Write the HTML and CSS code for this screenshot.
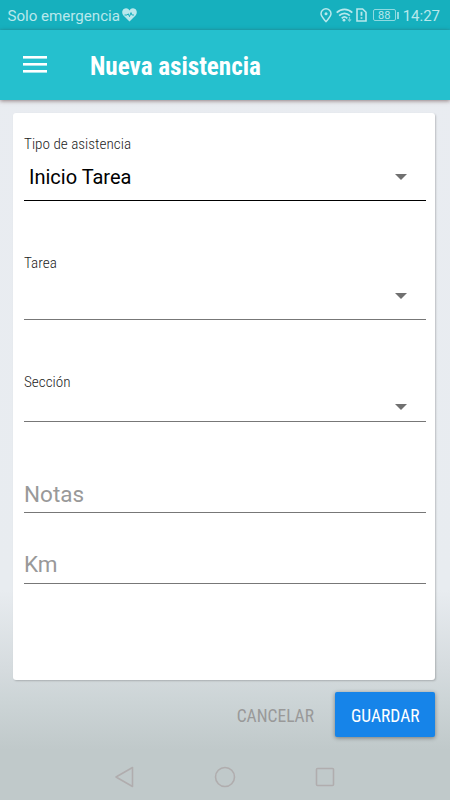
FILE: index.html
```html
<!DOCTYPE html>
<html lang="es">
<head>
    <meta charset="UTF-8">
    <meta name="viewport" content="width=device-width, initial-scale=1.0">
    <title>Nueva asistencia</title>
    <link rel="stylesheet" href="styles.css">
</head>
<body>
    <div class="status-bar">
        <span class="carrier">Solo emergencia</span>
        <svg class="heart" width="15" height="14" viewBox="0 0 15 14">
            <path d="M7.5 13.5L1.2 7.2C-.4 5.2 0 2.3 1.8 1.1 3.7-.2 6.2.2 7.5 2.4 8.8.2 11.3-.2 13.2 1.1 15 2.3 15.4 5.2 13.8 7.2z" fill="#b9e8ec"/>
            <path d="M2.5 7H5L6.3 5.8 7.5 8.6 9 4.6 9.9 7H12" fill="none" stroke="#16b0be" stroke-width="1"/>
        </svg>
        <div class="status-icons">
            <svg width="12" height="15" viewBox="0 0 12 15" fill="none" stroke="#b9e8ec" stroke-width="1.5">
                <path d="M6 13.6C3.4 10.5 1 8.4 1 5.8a5 5 0 0 1 10 0C11 8.4 8.6 10.5 6 13.6z"/>
                <circle cx="6" cy="5.8" r="1.5" fill="#b9e8ec" stroke="none"/>
            </svg>
            <svg width="17" height="14" viewBox="0 0 17 14" fill="none" stroke="#b9e8ec" stroke-width="1.8">
                <path d="M.7 4.6C5.2.2 11.8.2 16.3 4.6M3.2 7.6C6.3 4.5 10.7 4.5 13.8 7.6M5.7 10.3C7.4 8.6 9.6 8.6 11.3 10.3"/>
                <circle cx="8" cy="12.2" r="1.4" fill="#b9e8ec" stroke="none"/>
                <path d="M13.5 9v4M11.9 11.4l1.6 1.7 1.6-1.7" stroke="#7cd3db" stroke-width="1.2"/>
            </svg>
            <svg width="11" height="14" viewBox="0 0 11 14" fill="none" stroke="#b9e8ec" stroke-width="1.6">
                <path d="M1 1h5.6L10 4.3V13H1z"/>
                <path d="M5.5 3.8v4M5.5 9.2v1.6" stroke-width="1.8"/>
            </svg>
            <div class="battery"><span>88</span><i></i></div>
        </div>
        <span class="clock">14:27</span>
    </div>

    <header class="toolbar">
        <svg class="menu" width="24" height="18" viewBox="0 0 24 18" fill="#fff">
            <rect y="1" width="24" height="2.6"/>
            <rect y="8" width="24" height="2.6"/>
            <rect y="15" width="24" height="2.6"/>
        </svg>
        <h1>Nueva asistencia</h1>
    </header>

    <main class="card">
        <div class="field field-tipo">
            <label>Tipo de asistencia</label>
            <div class="select"><span>Inicio Tarea</span><i class="arrow"></i></div>
        </div>
        <div class="field field-tarea">
            <label>Tarea</label>
            <div class="select"><span></span><i class="arrow"></i></div>
        </div>
        <div class="field field-seccion">
            <label>Sección</label>
            <div class="select"><span></span><i class="arrow"></i></div>
        </div>
        <div class="input input-notas">Notas</div>
        <div class="input input-km">Km</div>
    </main>

    <div class="actions">
        <button class="btn btn-cancel">CANCELAR</button>
        <button class="btn btn-save">GUARDAR</button>
    </div>

    <nav class="nav-bar">
        <svg width="22" height="22" viewBox="0 0 22 22"><path d="M2 11L18.5 1.5V20.5z"/></svg>
        <svg width="22" height="22" viewBox="0 0 22 22"><circle cx="11" cy="11" r="9.5"/></svg>
        <svg width="22" height="22" viewBox="0 0 22 22"><rect x="2.5" y="2.5" width="17" height="17" rx="1"/></svg>
    </nav>
</body>
</html>
```

FILE: styles.css
```css
* {
    box-sizing: border-box;
}
body {
    margin: 0;
    height: 800px;
    display: flex;
    flex-direction: column;
    overflow: hidden;
    font-family: Roboto, sans-serif;
    background: linear-gradient(#e9ecf1 0, #e8ecf0 590px, #d5dbde 670px, #cdd5d7 698px, #c0c9ca 750px);
}
.status-bar {
    height: 30px;
    flex: none;
    display: flex;
    align-items: center;
    padding: 0 10px 0 7.5px;
    background: #16b0be;
    color: #b9e8ec;
    font-size: 15px;
}
.carrier {
    padding-top: 1px;
    font-size: 15.1px;
}
.heart {
    margin-left: 2px;
}
.status-icons {
    display: flex;
    align-items: center;
    gap: 3.5px;
    margin-left: auto;
}
.battery {
    display: flex;
    align-items: center;
    gap: 1px;
    margin-left: 2px;
    font-size: 11px;
    line-height: 11px;
}
.battery span {
    width: 23px;
    height: 12px;
    border: 1px solid #8fdae1;
    border-radius: 2px;
    text-align: center;
}
.battery i {
    width: 2px;
    height: 7px;
    background: #8fdae1;
}
.clock {
    margin-left: 4px;
    padding-top: 1px;
    font-size: 15px;
}
.toolbar {
    height: 69.5px;
    flex: none;
    display: flex;
    align-items: center;
    padding: 0 23px;
    background: #25c0ce;
    box-shadow: 0 1px 4px rgba(60, 20, 20, 0.5);
}
.menu {
    margin-top: -1px;
}
h1 {
    margin: 3px 0 0 43px;
    color: #fff;
    font-family: 'Roboto Condensed', Roboto, sans-serif;
    font-stretch: 75%;
    font-size: 25.1px;
    font-weight: 700;
}
.card {
    width: 422.5px;
    height: 567.5px;
    flex: none;
    margin: 13px 0 0 12.5px;
    padding: 21.5px 9px 0 11.5px;
    background: #fff;
    border-radius: 3px;
    box-shadow: 1px 1px 2px rgba(0, 0, 0, 0.2);
}
.field {
    display: flex;
    flex-direction: column;
    height: 67px;
    border-bottom: 1px solid #777;
}
.field-tipo {
    border-color: #000;
}
.field-tarea {
    margin-top: 52px;
}
.field-seccion {
    margin-top: 52px;
    height: 50px;
}
label {
    height: 20px;
    line-height: 20px;
    color: #222;
    font-family: 'Roboto Condensed', Roboto, sans-serif;
    font-stretch: 75%;
    font-size: 15.2px;
    font-weight: 350;
}
.select {
    flex: 1;
    display: flex;
    align-items: center;
    justify-content: space-between;
    padding: 0 19px 0 5px;
    font-size: 20px;
}
.arrow {
    border: 6px solid transparent;
    border-top-color: #707070;
    border-bottom: 0;
}
.input {
    display: flex;
    align-items: flex-end;
    padding-bottom: 5px;
    height: 71px;
    border-bottom: 1px solid #777;
    color: #999;
    font-size: 22.5px;
    line-height: 26px;
}
.input-notas {
    height: 91px;
}
.input-km {
    padding-bottom: 6px;
}
.actions {
    display: flex;
    justify-content: flex-end;
    gap: 5px;
    margin: 12px 15px 0 0;
}
.btn {
    height: 45px;
    border: none;
    border-radius: 2px;
    padding: 3px 16px 0;
    background: none;
    font-family: 'Roboto Condensed', Roboto, sans-serif;
    font-stretch: 75%;
    font-size: 17.5px;
}
.btn-cancel {
    color: #999;
}
.btn-save {
    width: 100px;
    background: #1684e9;
    color: #fff;
    box-shadow: 0 1px 4px rgba(0, 0, 0, 0.4);
}
.nav-bar {
    display: flex;
    justify-content: center;
    gap: 78px;
    margin-top: 29px;
}
.nav-bar svg {
    fill: none;
    stroke: #b0adae;
    stroke-width: 1.6;
    stroke-linejoin: round;
}
```
